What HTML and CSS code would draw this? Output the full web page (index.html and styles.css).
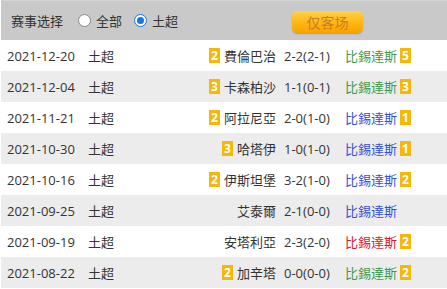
FILE: index.html
```html
<!DOCTYPE html>
<html lang="zh">
<head>
<meta charset="utf-8">
<link rel="stylesheet" href="styles.css">
</head>
<body>
<div class="panel">
  <div class="bar">
    <span class="label">赛事选择</span>
    <label class="opt"><span class="radio"></span>全部</label>
    <label class="opt"><span class="radio on"></span>土超</label>
    <span class="btn">仅客场</span>
  </div>
  <div class="row">
    <span class="date">2021-12-20</span><span class="lg">土超</span>
    <span class="home"><i class="b">2</i>費倫巴治</span>
    <span class="score">2-2(2-1)</span>
    <span class="away g">比錫達斯<i class="b">5</i></span>
  </div>
  <div class="row alt">
    <span class="date">2021-12-04</span><span class="lg">土超</span>
    <span class="home"><i class="b">3</i>卡森柏沙</span>
    <span class="score">1-1(0-1)</span>
    <span class="away g">比錫達斯<i class="b">3</i></span>
  </div>
  <div class="row">
    <span class="date">2021-11-21</span><span class="lg">土超</span>
    <span class="home"><i class="b">2</i>阿拉尼亞</span>
    <span class="score">2-0(1-0)</span>
    <span class="away bl">比錫達斯<i class="b">1</i></span>
  </div>
  <div class="row alt">
    <span class="date">2021-10-30</span><span class="lg">土超</span>
    <span class="home"><i class="b">3</i>哈塔伊</span>
    <span class="score">1-0(1-0)</span>
    <span class="away bl">比錫達斯<i class="b">1</i></span>
  </div>
  <div class="row">
    <span class="date">2021-10-16</span><span class="lg">土超</span>
    <span class="home"><i class="b">2</i>伊斯坦堡</span>
    <span class="score">3-2(1-0)</span>
    <span class="away bl">比錫達斯<i class="b">2</i></span>
  </div>
  <div class="row alt">
    <span class="date">2021-09-25</span><span class="lg">土超</span>
    <span class="home">艾泰爾</span>
    <span class="score">2-1(0-0)</span>
    <span class="away bl">比錫達斯</span>
  </div>
  <div class="row">
    <span class="date">2021-09-19</span><span class="lg">土超</span>
    <span class="home">安塔利亞</span>
    <span class="score">2-3(2-0)</span>
    <span class="away r">比錫達斯<i class="b">2</i></span>
  </div>
  <div class="row alt">
    <span class="date">2021-08-22</span><span class="lg">土超</span>
    <span class="home"><i class="b">2</i>加辛塔</span>
    <span class="score">0-0(0-0)</span>
    <span class="away g">比錫達斯<i class="b">2</i></span>
  </div>
</div>
</body>
</html>
```
FILE: styles.css
```css
html, body {
  margin: 0;
  padding: 0;
  background: #fff;
}
body {
  font-family: "Open Sans", "Noto Sans CJK SC", sans-serif;
  font-size: 13px;
  color: #333;
}
.panel {
  width: 447px;
  padding-left: 1px;
  box-sizing: border-box;
}
.bar {
  height: 40px;
  background: #c9c9c9;
  border-top: 1px solid #d6d6d6;
  box-sizing: border-box;
  display: flex;
  align-items: center;
  padding-left: 10px;
}
.label {
  margin-right: 15px;
}
.opt {
  display: flex;
  align-items: center;
  margin-right: 12px;
}
.radio {
  width: 11px;
  height: 11px;
  border: 1px solid #8a8a8a;
  border-radius: 50%;
  background: #fff;
  margin-right: 5px;
  position: relative;
}
.radio.on {
  border-color: #1a73e8;
}
.radio.on::after {
  content: "";
  position: absolute;
  left: 2px;
  top: 2px;
  width: 7px;
  height: 7px;
  border-radius: 50%;
  background: #1a73e8;
}
.btn {
  margin-left: auto;
  margin-right: 84px;
  width: 71px;
  height: 22px;
  border-radius: 5px;
  background: linear-gradient(#ffd24a, #ffb512 55%, #f7a400);
  box-shadow: 0 1px 1px rgba(120, 80, 0, 0.35);
  color: #c5801e;
  font-size: 14px;
  display: flex;
  align-items: center;
  justify-content: center;
  margin-top: 3px;
}
.row {
  height: 31px;
  display: grid;
  grid-template-columns: 81px 39px 1fr 69px 102px;
  align-items: center;
  padding-left: 6px;
}
.alt {
  background: #ececec;
}
.home {
  display: flex;
  justify-content: flex-end;
  align-items: center;
}
.score {
  padding-left: 8px;
}
.away {
  display: flex;
  align-items: center;
}
.g { color: #3b9a4c; }
.bl { color: #3350d8; }
.r { color: #e0142c; }
.b {
  font-style: normal;
  display: inline-block;
  width: 11px;
  height: 15px;
  line-height: 15px;
  text-align: center;
  background: #f5b70a;
  color: #fff;
  font-size: 12px;
  font-weight: bold;
}
.home .b { margin-right: 4px; }
.away .b { margin-left: 3px; }
```
